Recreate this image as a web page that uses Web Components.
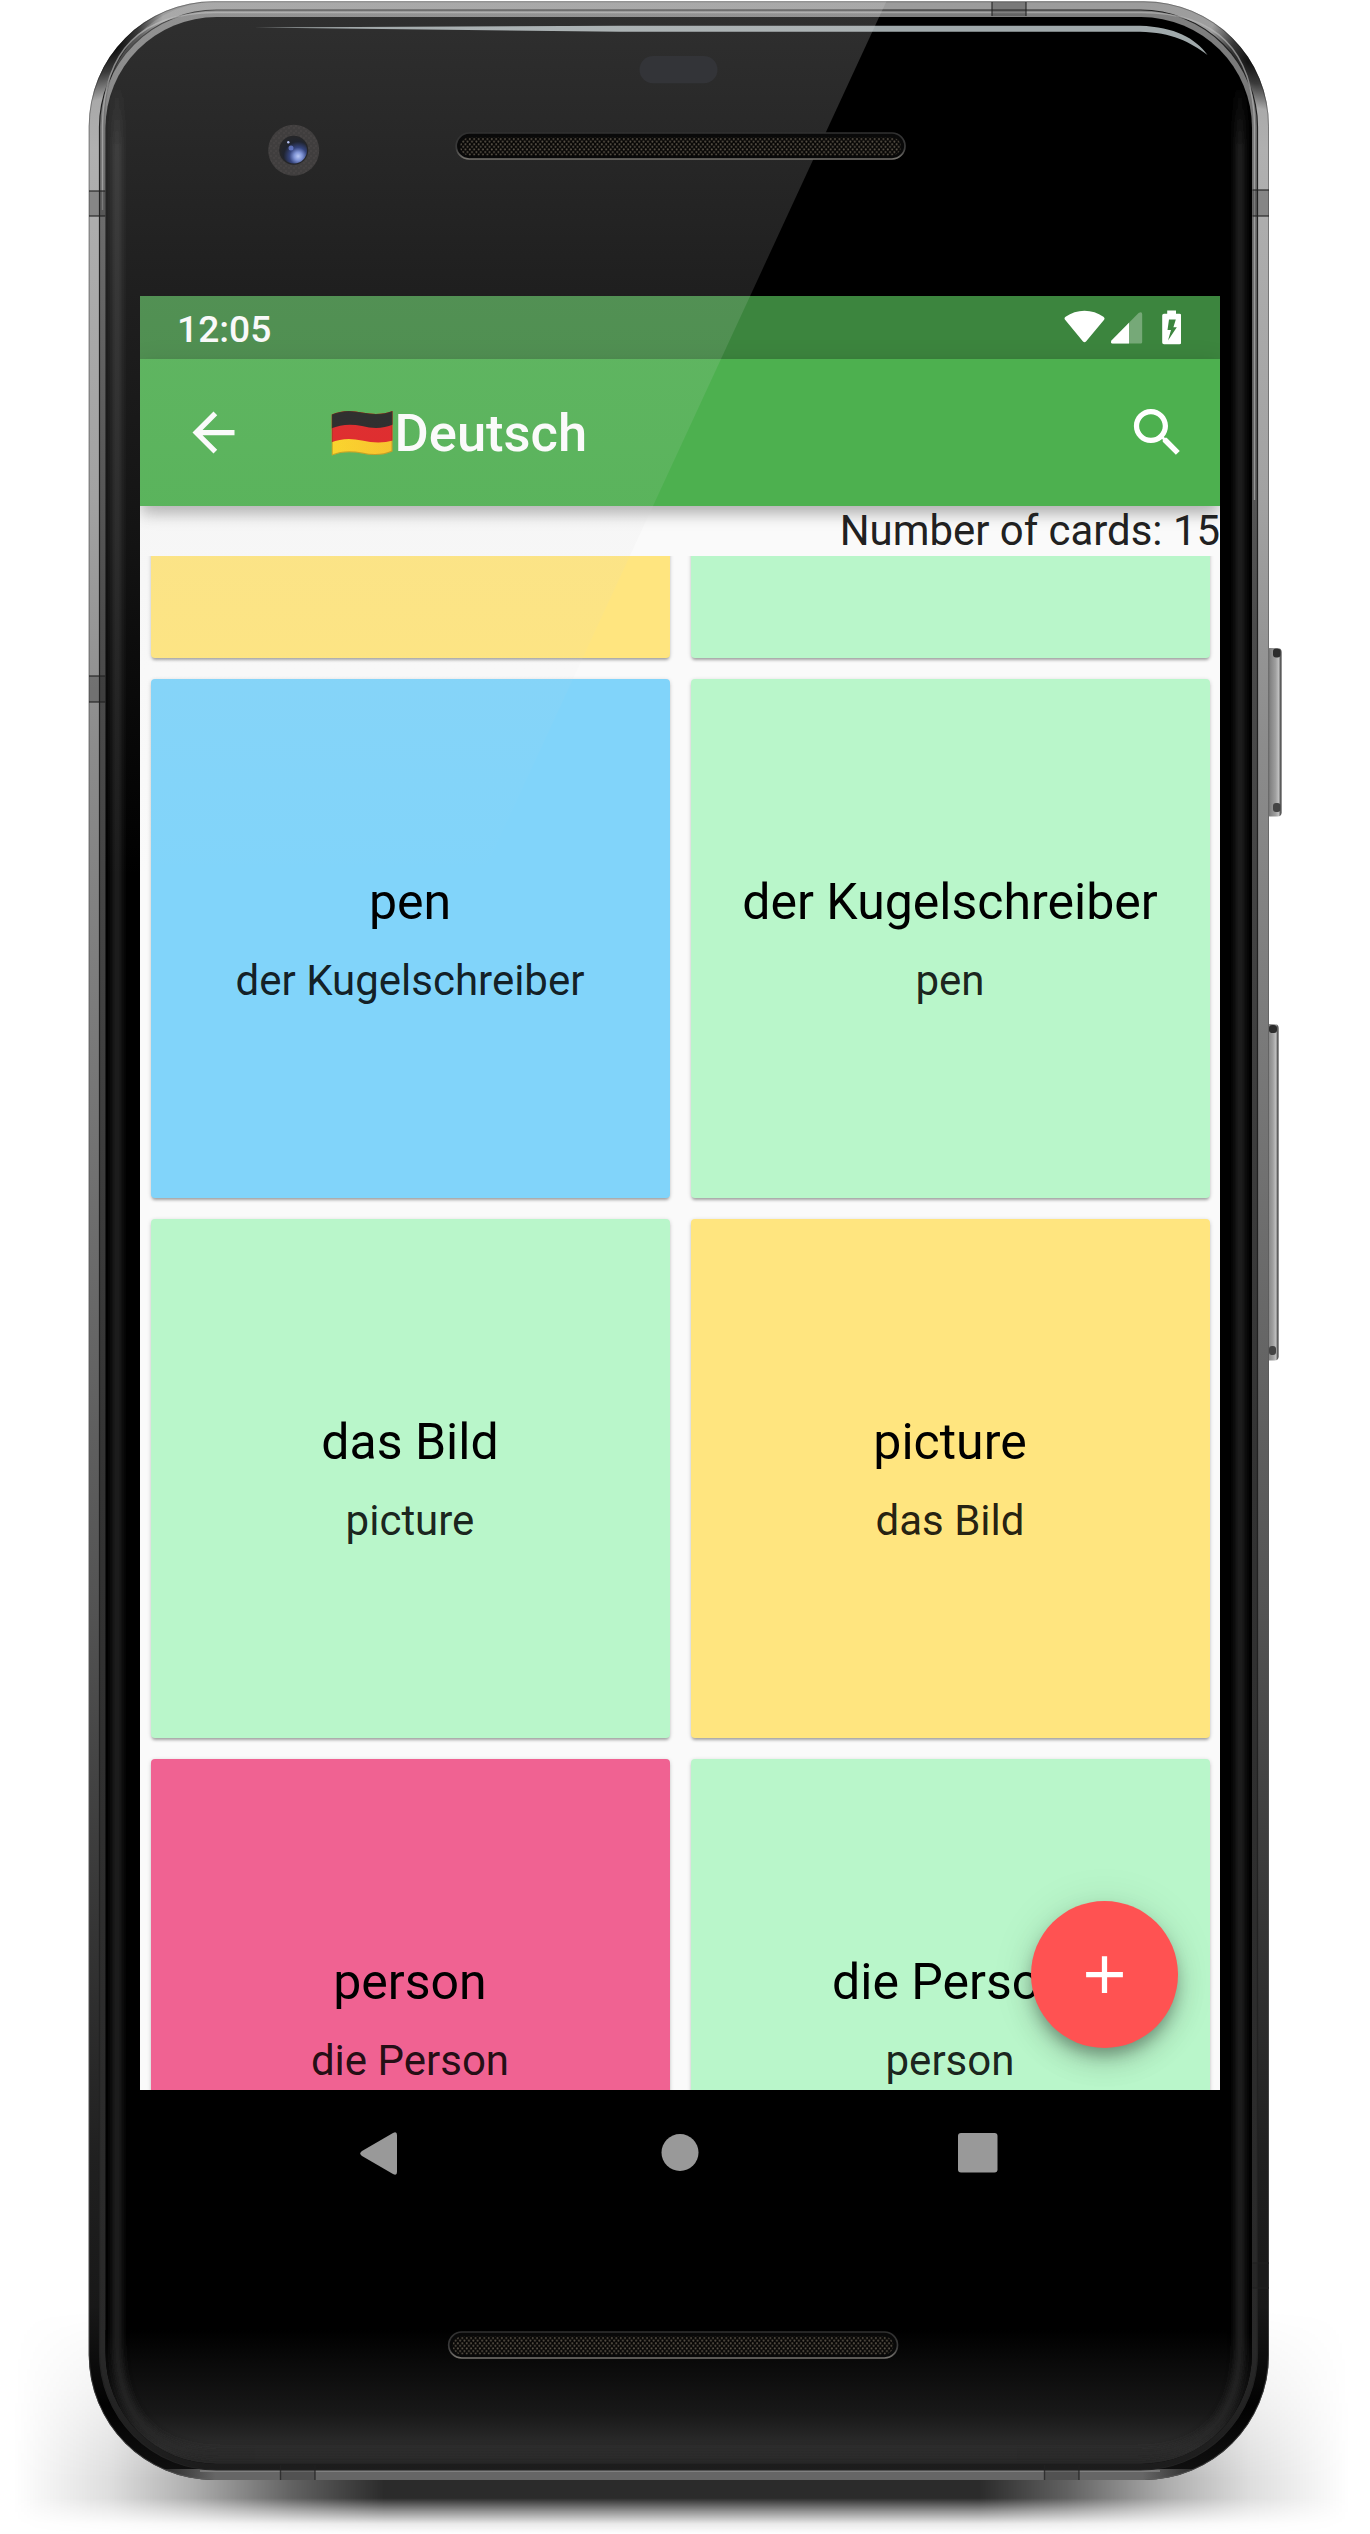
<!DOCTYPE html>
<html lang="de">
<head>
<meta charset="utf-8">
<title>Deutsch</title>
<style>
html, body { margin: 0; padding: 0; background: #fff; }
body { width: 1370px; height: 2534px; overflow: hidden; font-family: Roboto, "Noto Sans", sans-serif; }
</style>
</head>
<body>
<phone-device>
  <app-screen>
    <status-bar slot="top" time="12:05"></status-bar>
    <app-bar slot="top" heading="Deutsch"></app-bar>
    <card-count slot="count">Number of cards: 15</card-count>
    <card-grid>
      <flash-card tone="yellow"></flash-card>
      <flash-card tone="green"></flash-card>
      <flash-card tone="blue" front="pen" back="der Kugelschreiber"></flash-card>
      <flash-card tone="green" front="der Kugelschreiber" back="pen"></flash-card>
      <flash-card tone="green" front="das Bild" back="picture"></flash-card>
      <flash-card tone="yellow" front="picture" back="das Bild"></flash-card>
      <flash-card tone="pink" front="person" back="die Person"></flash-card>
      <flash-card tone="green" front="die Person" back="person"></flash-card>
    </card-grid>
    <add-button slot="fab"></add-button>
  </app-screen>
  <nav-buttons></nav-buttons>
</phone-device>

<script>
const define = (name, html) => customElements.define(name, class extends HTMLElement {
  constructor() {
    super();
    const root = this.attachShadow({ mode: 'open' });
    root.innerHTML = html;
  }
  connectedCallback() {
    this.shadowRoot.querySelectorAll('[data-attr]').forEach(n => {
      n.textContent = this.getAttribute(n.dataset.attr) || '';
    });
  }
});

define('status-bar', `
<style>
:host { display: flex; align-items: center; justify-content: space-between; height: 63px; box-sizing: border-box; padding: 0 39px 0 37px; background: #3c853e; color: #fff; }
.time { font-size: 37.200px; font-weight: 500; line-height: 43px; padding-top: 3px; }
svg { display: block; }
</style>
<span class="time" data-attr="time"></span>
<svg width="117" height="35" viewBox="1064 309.5 117 35" fill="#fff">
  <path d="M1065.3 319.5 Q1063.6 317.8 1065.6 316.3 Q1074 310.2 1084.5 310.2 Q1095 310.2 1103.4 316.3 Q1105.4 317.8 1103.9 319.5 L1086 341 Q1084.5 342.6 1083 341Z"/>
  <path opacity=".3" d="M1111.5 340 L1138.6 312.6 Q1142.200 310.500 1142.200 314 V341.500 Q1142.200 343 1140.700 343 H1112.500 Q1110 342.500 1111.500 340Z"/>
  <path d="M1111.500 340 L1129 322.300 V343 H1112.500 Q1110 342.500 1111.500 340Z"/>
  <path fill-rule="evenodd" d="M1167.200 310 H1176 V313.200 H1179.500 Q1181.200 313.200 1181.200 315 V342 Q1181.200 343.800 1179.500 343.800 H1164 Q1162.200 343.800 1162.200 342 V315 Q1162.200 313.200 1164 313.200 H1167.200Z M1169 319 L1167.500 329.500 H1171 L1168 340 L1176.800 326.800 H1173.400 L1175.800 319Z"/>
</svg>`);

define('app-bar', `
<style>
:host { display: flex; align-items: center; height: 147px; box-sizing: border-box; padding: 0 31.500px 0 42px; background: #4db04f; color: #fff; position: relative; box-shadow: 0 10px 13px -2px rgba(0,0,0,.22), 0 3px 22px rgba(0,0,0,.13); }
svg { display: block; flex: none; }
.title { display: flex; align-items: center; margin-left: 86px; flex: 1; font-size: 52.500px; font-weight: 500; line-height: 62px; }
.title svg { margin-top: 2px; margin-left: -.500px; }
.title span { margin-left: 2px; }
</style>
<svg width="63" height="63" viewBox="0 0 24 24" fill="#fff"><path d="M20 11H7.830l5.590-5.590L12 4l-8 8 8 8 1.410-1.410L7.830 13H20v-2z"/></svg>
<div class="title">
  <svg width="62" height="48" viewBox="331 410 62 48">
    <defs><clipPath id="flag"><path d="M331.800 414.500 Q345 408.500 362 412.500 Q380 416 392.500 411 V451.500 Q379 457.500 362 453.500 Q345 450 331.800 455.500Z"/></clipPath>
    <linearGradient id="gold"><stop offset="0" stop-color="#ffd519"/><stop offset="1" stop-color="#fcc01b"/></linearGradient></defs>
    <g clip-path="url(#flag)">
      <rect x="331" y="408" width="62" height="50" fill="url(#gold)"/>
      <path d="M331 405H393V440.500Q379 444.500 362 440.500Q345 436.500 331 442.500Z" fill="#e0191b"/>
      <path d="M331 405H393V424.500Q379 430.500 362 426Q345 422.500 331 428.500Z" fill="#1a1a1a"/>
      <path d="M331.800 414.500 Q345 408.500 362 412.500 Q380 416 392.500 411 V451.500 Q379 457.500 362 453.500 Q345 450 331.800 455.500Z" fill="none" stroke="#3b3000" stroke-opacity=".3" stroke-width="2"/>
    </g>
  </svg>
  <span data-attr="heading"></span>
</div>
<svg width="63" height="63" viewBox="0 0 24 24" fill="#fff"><path d="M15.500 14h-.79l-.28-.27C15.410 12.590 16 11.110 16 9.500 16 5.910 13.090 3 9.500 3S3 5.910 3 9.500 5.910 16 9.500 16c1.610 0 3.090-.59 4.230-1.570l.27.28v.79l5 4.990L20.490 19l-4.990-5zm-6 0C7.010 14 5 11.990 5 9.500S7.010 5 9.500 5 14 7.010 14 9.500 11.990 14 9.500 14z"/></svg>`);

define('card-count', `
<style>:host { display: block; height: 50px; line-height: 50px; text-align: right; font-size: 41.900px; color: #212121; position: relative; white-space: nowrap; }</style><slot></slot>`);

define('card-grid', `
<style>:host { display: grid; grid-template-columns: 540px 540px; grid-template-rows: 112px 540px 540px 540px; height: 1534px; overflow: hidden; }
::slotted(:nth-child(-n+2)) { margin-top: -20px !important; }</style><slot></slot>`);

define('flash-card', `
<style>
:host { display: flex; flex-direction: column; align-items: center; box-sizing: border-box; margin: 10.500px; border-radius: 4px; min-height: 0; white-space: nowrap; box-shadow: 0 3px 3px -1px rgba(0,0,0,.27), 0 1px 4px rgba(0,0,0,.16); }
:host([front]) { padding-top: 185px; }
:host(:not([front])) div { display: none; }
:host([tone=yellow]) { background: #ffe57f; }
:host([tone=green]) { background: #b9f6ca; }
:host([tone=blue]) { background: #81d4fa; }
:host([tone=pink]) { background: #f06292; }
.front { font-size: 50px; line-height: 76px; color: #000; }
.back { font-size: 42px; line-height: 76px; margin-top: 3px; color: rgba(0,0,0,.87); }
</style>
<div class="front" data-attr="front"></div><div class="back" data-attr="back"></div>`);

define('add-button', `
<style>:host { display: flex; align-items: center; justify-content: center; width: 147px; height: 147px; border-radius: 50%; background: #ff5252; box-shadow: 0 9px 14px -2px rgba(0,0,0,.26), 0 14px 28px rgba(0,0,0,.15), 0 3px 44px rgba(0,0,0,.10); }</style>
<svg width="63" height="63" viewBox="0 0 24 24" fill="#fff"><path d="M19 13h-6v6h-2v-6H5v-2h6V5h2v6h6v2z"/></svg>`);

define('app-screen', `
<style>:host { display: flex; flex-direction: column; width: 1080px; height: 1794px; overflow: hidden; background: #fafafa; position: relative; }
.fab { position: absolute; right: 42px; bottom: 42px; }</style>
<slot name="top"></slot><slot name="count"></slot><slot></slot><div class="fab"><slot name="fab"></slot></div>`);

define('nav-buttons', `
<style>:host { display: flex; align-items: center; justify-content: space-between; width: 638px; height: 126px; margin-left: 220px; }
svg { display: block; } .home { margin-left: 3px; }</style>
<svg width="38" height="43" fill="#999"><path d="M2 19 L33 1 Q37 -1 37 3 V40 Q37 44 33 42 L2 24 Q-1.500 21.500 2 19Z"/></svg>
<svg class="home" width="38" height="38" fill="#999"><circle cx="19" cy="18.500" r="18.500"/></svg>
<svg width="40" height="40" fill="#999"><rect width="39.500" height="39.500" rx="3"/></svg>`);

define('phone-device', `
<style>
:host { display: grid; width: 1370px; height: 2534px; }
svg, .content { grid-area: 1 / 1; display: block; }
.content { padding: 296px 0 0 140px; }
.glare { position: relative; pointer-events: none; }
</style>
<svg width="1370" height="2534" viewBox="0 0 1370 2534">
  <defs>
    <linearGradient id="metal" x1="0" y1="0" x2="0" y2="1">
      <stop offset="0" stop-color="#9b9b9b"/><stop offset=".06" stop-color="#b0b0b0"/><stop offset=".2" stop-color="#a2a2a2"/><stop offset=".3" stop-color="#8c8c8c"/><stop offset=".45" stop-color="#757575"/><stop offset=".65" stop-color="#535353"/><stop offset=".87" stop-color="#202020"/><stop offset=".93" stop-color="#181818"/><stop offset=".97" stop-color="#020202"/><stop offset="1" stop-color="#111"/>
    </linearGradient>
    <linearGradient id="rim" x1="0" y1="0" x2="0" y2="1">
      <stop offset="0" stop-color="#808080"/><stop offset=".08" stop-color="#6c6c6c"/><stop offset=".25" stop-color="#4c4c4c"/><stop offset=".6" stop-color="#333"/><stop offset=".95" stop-color="#292929"/><stop offset="1" stop-color="#1c1c1c"/>
    </linearGradient>
    <radialGradient id="dark"><stop offset="0" stop-color="#000" stop-opacity=".9"/><stop offset=".45" stop-color="#000" stop-opacity=".65"/><stop offset="1" stop-color="#000" stop-opacity="0"/></radialGradient>
    <linearGradient id="lower" gradientUnits="userSpaceOnUse" x1="140" x2="1218" y1="0" y2="0"><stop offset="0" stop-color="#666" stop-opacity="0"/><stop offset=".07" stop-color="#666"/><stop offset=".93" stop-color="#666"/><stop offset="1" stop-color="#666" stop-opacity="0"/></linearGradient>
    <linearGradient id="chin" gradientUnits="userSpaceOnUse" x1="0" x2="0" y1="2330" y2="2464"><stop offset="0" stop-color="#000"/><stop offset=".25" stop-color="#0a0a0a"/><stop offset=".62" stop-color="#181818"/><stop offset=".88" stop-color="#2d2d2d"/><stop offset="1" stop-color="#262626"/></linearGradient>
    <linearGradient id="across" gradientUnits="userSpaceOnUse" x1="0" x2="1370" y1="0" y2="0"><stop offset=".01" stop-opacity="0"/><stop offset=".08" stop-opacity=".13"/><stop offset=".141" stop-opacity=".32"/><stop offset=".214" stop-opacity=".62"/><stop offset=".28" stop-opacity=".83"/><stop offset=".715" stop-opacity=".83"/><stop offset=".779" stop-opacity=".62"/><stop offset=".852" stop-opacity=".32"/><stop offset=".913" stop-opacity=".13"/><stop offset=".985" stop-opacity="0"/></linearGradient>
    <linearGradient id="down" gradientUnits="userSpaceOnUse" x1="0" x2="0" y1="2310" y2="2534"><stop offset="0" stop-color="#fff" stop-opacity="0"/><stop offset=".35" stop-color="#fff" stop-opacity=".4"/><stop offset=".75" stop-color="#fff" stop-opacity="1"/><stop offset=".84" stop-color="#fff" stop-opacity="1"/><stop offset=".9" stop-color="#fff" stop-opacity=".5"/><stop offset=".955" stop-color="#fff" stop-opacity=".1"/><stop offset="1" stop-color="#fff" stop-opacity="0"/></linearGradient>
    <mask id="fall" maskUnits="userSpaceOnUse" x="0" y="2300" width="1370" height="234"><rect y="2310" width="1370" height="224" fill="url(#down)"/></mask>
    <linearGradient id="key"><stop offset="0" stop-color="#555"/><stop offset=".3" stop-color="#858585"/><stop offset=".62" stop-color="#a0a0a0"/><stop offset=".82" stop-color="#c0c0c0"/><stop offset="1" stop-color="#222"/></linearGradient>
    <clipPath id="glass"><rect x="105.500" y="17" width="1146.500" height="2447" rx="111"/></clipPath>
    <filter id="soft" filterUnits="userSpaceOnUse" x="0" y="0" width="1370" height="2534"><feGaussianBlur stdDeviation="3.500"/></filter>
    <linearGradient id="shine" gradientUnits="userSpaceOnUse" x1="248" x2="500" y1="0" y2="0"><stop offset="0" stop-color="#8b9496"/><stop offset="1" stop-color="#a0a9ab"/></linearGradient>
    <linearGradient id="edge" gradientUnits="userSpaceOnUse" x1="0" x2="0" y1="80" y2="700"><stop offset="0" stop-color="#2c2c2c" stop-opacity="0"/><stop offset=".12" stop-color="#2c2c2c"/><stop offset="1" stop-color="#2c2c2c"/></linearGradient>
  </defs>
  <rect y="2310" width="1370" height="224" fill="url(#across)" mask="url(#fall)"/>
  <g>
    <rect x="1266" y="648" width="15.500" height="168.500" rx="4" fill="url(#key)"/>
    <rect x="1273" y="648.500" width="7.500" height="9" rx="3" fill="#2c2c2c"/><rect x="1273" y="803" width="7.500" height="9" rx="3" fill="#444"/>
    <rect x="1264" y="1024" width="14.500" height="336.500" rx="4" fill="url(#key)"/>
    <rect x="1269" y="1025" width="8" height="8" rx="3" fill="#2c2c2c"/><rect x="1269" y="1346" width="7" height="9" rx="3" fill="#444"/>
  </g>
  <rect x="88.700" y="1.300" width="1180.300" height="2478.700" rx="125" fill="url(#metal)"/>
  <rect x="89.200" y="1.800" width="1179.300" height="2477.700" rx="124.500" fill="none" stroke="#555" stroke-opacity=".6" stroke-width="1"/>
  <clipPath id="body"><rect x="88.700" y="1.300" width="1180.300" height="2478.700" rx="125"/></clipPath>
  <g clip-path="url(#body)">
    <ellipse cx="117" cy="48" rx="64" ry="30" transform="rotate(-52 117 48)" fill="url(#dark)"/>
    <ellipse cx="1248" cy="62" rx="54" ry="28" transform="rotate(58 1248 62)" fill="url(#dark)"/>
    <rect x="140" y="2469" width="1078" height="11" fill="url(#lower)"/>
    <rect x="200" y="2470" width="960" height="2" fill="#999" opacity=".5"/>
  </g>
  <rect x="99.500" y="10" width="1158" height="2460" rx="117" fill="url(#rim)"/>
  <rect x="99.500" y="10" width="1158" height="2460" rx="117" fill="none" stroke="#222" stroke-width="1.200"/>
  <path d="M102.500 210 V125 Q104 13 215 12.500 H1142 Q1253 13 1254.500 125 V500" fill="none" stroke="#b8b8b8" stroke-width="1.400" opacity=".65"/>
  <rect x="105.500" y="17" width="1146.500" height="2447" rx="111" fill="#000"/>
  <g clip-path="url(#glass)">
    <rect x="105" y="2330" width="1148" height="134" fill="url(#chin)"/>
    <path d="M117 90 V2345 Q119 2453 220 2454 H1138 Q1239 2453 1240 2345 V90" fill="none" stroke="url(#edge)" stroke-width="9" filter="url(#soft)" opacity=".85"/>
  </g>
  <g fill="#222" fill-opacity=".28">
    <path d="M89 191h16.500v25H89zM89 676h16.500v26H89zM1252.500 190h16.500v26h-16.500zM1252.500 2263h16.500v25h-16.500zM992 2h34v14h-34zM280.500 2465h34.500v15h-34.500zM1044.500 2465h34.500v15h-34.500z"/>
    <path fill="none" stroke="#222" stroke-opacity=".75" stroke-width="1.400" d="M89 191h16.500M89 216h16.500M89 676h16.500M89 702h16.500M1252.500 190h16.500M1252.500 216h16.500M1252.500 2263h16.500M1252.500 2288h16.500M992 2v14M1026 2v14M280.500 2465v15M315 2465v15M1044.500 2465v15M1079 2465v15"/>
  </g>
  <path d="M248 27.500 L620 25.800 H1140 C1175 27 1195 38 1207.500 55 C1190 42 1172 32.500 1140 31.800 H620Z" fill="url(#shine)"/>
</svg>
<div class="content"><slot></slot></div>
<svg class="glare" width="1370" height="2534" viewBox="0 0 1370 2534">
  <defs>
    <linearGradient id="fade" gradientUnits="userSpaceOnUse" x1="0" x2="0" y1="0" y2="880"><stop offset="0" stop-color="#d4d4d4" stop-opacity=".225"/><stop offset=".336" stop-color="#d4d4d4" stop-opacity=".145"/><stop offset=".62" stop-color="#d4d4d4" stop-opacity=".09"/><stop offset=".73" stop-color="#d4d4d4" stop-opacity=".06"/><stop offset="1" stop-color="#d4d4d4" stop-opacity="0"/></linearGradient>
    <clipPath id="face"><rect x="105.500" y="1.500" width="1148" height="2462" rx="112"/></clipPath>
    <pattern id="mesh" patternUnits="userSpaceOnUse" width="4.400" height="5.200"><rect width="4.400" height="5.200" fill="#080706"/><circle cx="1.200" cy="1.300" r="1" fill="#5b5449"/><circle cx="3.400" cy="3.900" r="1" fill="#5b5449"/></pattern>
    <linearGradient id="lip" x1="0" x2="0" y1="0" y2="1"><stop offset="0" stop-color="#303030"/><stop offset=".6" stop-color="#3b3b3b"/><stop offset="1" stop-color="#77746f"/></linearGradient>
    <radialGradient id="lens" cx=".66" cy=".72" r=".7"><stop offset="0" stop-color="#b9c8f4"/><stop offset=".22" stop-color="#8195d6"/><stop offset=".48" stop-color="#35447c"/><stop offset=".8" stop-color="#20242f"/><stop offset="1" stop-color="#24262b"/></radialGradient>
    <pattern id="grain" patternUnits="userSpaceOnUse" width="5" height="5"><rect width="5" height="5" fill="#403e3e"/><path d="M0 1h2M3 3h2" stroke="#4b4848"/></pattern>
  </defs>
  <path clip-path="url(#face)" d="M88 0 H887 L480 880 H88Z" fill="url(#fade)"/>
  <rect x="639.500" y="56" width="78" height="27.300" rx="13.600" fill="#333438"/>
  <circle cx="293.700" cy="150.300" r="25.500" fill="url(#grain)"/>
  <circle cx="293.700" cy="150.300" r="14.500" fill="#252629"/>
  <circle cx="294" cy="150.500" r="13" fill="url(#lens)"/>
  <circle cx="291" cy="148" r="2.500" fill="#6b80d0" opacity=".8"/><circle cx="288.300" cy="142.300" r="1.200" fill="#b7c3f3"/>
  <g id="speaker"><rect x="456.200" y="133" width="448.800" height="26" rx="13" fill="#090909" stroke="url(#lip)" stroke-width="1.700"/><rect x="460" y="137.500" width="441" height="18" rx="9" fill="url(#mesh)"/></g>
  <use href="#speaker" x="-7.500" y="2199"/>
</svg>`);
</script>
</body>
</html>
